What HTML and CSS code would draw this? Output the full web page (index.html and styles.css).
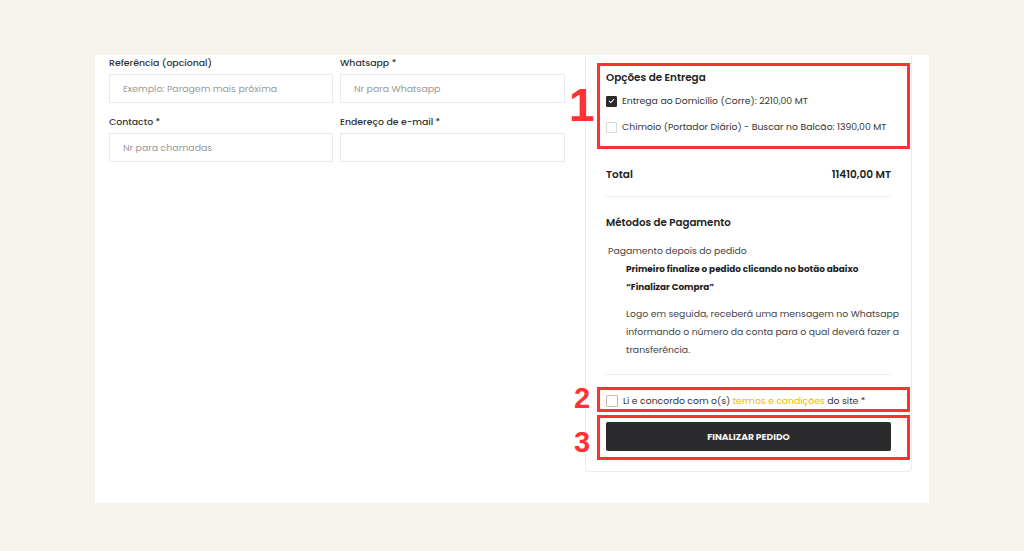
FILE: index.html
```html
<!DOCTYPE html>
<html lang="pt">
<head>
<meta charset="utf-8">
<link rel="stylesheet" href="styles.css">
</head>
<body>
<div class="panel">
  <div class="form">
    <div class="field">
      <label class="label">Referência (opcional)</label>
      <div class="input placeholder">Exemplo: Paragem mais próxima</div>
    </div>
    <div class="field">
      <label class="label">Whatsapp *</label>
      <div class="input placeholder">Nr para Whatsapp</div>
    </div>
    <div class="field">
      <label class="label">Contacto *</label>
      <div class="input placeholder">Nr para chamadas</div>
    </div>
    <div class="field">
      <label class="label">Endereço de e-mail *</label>
      <div class="input"></div>
    </div>
  </div>

  <div class="card">
    <h3 class="heading">Opções de Entrega</h3>
    <div class="option first">
      <span class="box checked">
        <svg viewBox="0 0 12 12" width="12" height="12"><path d="M3 6.2 L5.1 8.2 L9 4" fill="none" stroke="#fff" stroke-width="1.4" stroke-linecap="round" stroke-linejoin="round"/></svg>
      </span>
      <span>Entrega ao Domicílio (Corre): 2210,00 MT</span>
    </div>
    <div class="option">
      <span class="box"></span>
      <span>Chimoio (Portador Diário) - Buscar no Balcão: 1390,00 MT</span>
    </div>

    <div class="total">
      <span>Total</span>
      <span>11410,00 MT</span>
    </div>

    <h3 class="heading methods">Métodos de Pagamento</h3>
    <div class="payment">
      <div class="pay-title">Pagamento depois do pedido</div>
      <div class="pay-body">
        <p class="strong">Primeiro finalize o pedido clicando no botão abaixo<br>“Finalizar Compra”</p>
        <p>Logo em seguida, receberá uma mensagem no Whatsapp informando o número da conta para o qual deverá fazer a transferência.</p>
      </div>
    </div>

    <div class="terms">
      <span class="box terms-box"></span>
      <span>Li e concordo com o(s) <span class="link">termos e condições</span> do site *</span>
    </div>

    <button class="submit">FINALIZAR PEDIDO</button>

    <div class="mark mark1"></div>
    <div class="mark mark2"></div>
    <div class="mark mark3"></div>
    <span class="num num1">1</span>
    <span class="num num2">2</span>
    <span class="num num3">3</span>
  </div>
</div>
</body>
</html>
```

FILE: styles.css
```css
* { box-sizing: border-box; }
html, body { margin: 0; padding: 0; }
body {
  background: #f6f2ec;
  font-family: "Poppins", "Inter", "Liberation Sans", sans-serif;
  color: #333;
  width: 1024px;
  height: 551px;
  overflow: hidden;
}
.panel {
  margin: 55px 0 0 95px;
  width: 834px;
  height: 448px;
  background: #fff;
  display: flex;
  align-items: flex-start;
  padding-left: 14px;
}
.form {
  display: grid;
  grid-template-columns: 224px 225px;
  column-gap: 7px;
  row-gap: 11px;
  width: 456px;
}
.field { display: flex; flex-direction: column; }
.label {
  font-size: 9.35px;
  line-height: 15px;
  font-weight: 500;
  color: #333;
  margin-bottom: 4px;
}
.input {
  height: 29px;
  border: 1px solid #e9e9e9;
  font-size: 9.4px;
  line-height: 27px;
  padding-left: 13px;
}
.placeholder { color: #9a9a9a; }

.card {
  position: relative;
  margin-left: 20px;
  width: 327px;
  border: 1px solid #ededed;
  border-top: none;
  border-radius: 0 0 3px 3px;
  padding: 15px 20px 20px;
  font-size: 9.3px;
}
.heading {
  margin: 0;
  font-size: 10.4px;
  line-height: 16px;
  font-weight: 600;
  color: #222;
}
.option {
  display: flex;
  align-items: center;
  gap: 5px;
  line-height: 16px;
  margin-top: 10px;
  color: #333;
}
.option.first { margin-top: 7px; }
.box {
  width: 11px;
  height: 11px;
  border: 1px solid #d9d9d9;
  border-radius: 1px;
  background: #fff;
  display: inline-flex;
  align-items: center;
  justify-content: center;
  flex: none;
}
.box.checked { background: #2b2b2d; border-color: #2b2b2d; }
.box.checked svg { width: 10px; height: 10px; }
.total {
  display: flex;
  justify-content: space-between;
  margin-top: 32px;
  padding-bottom: 13px;
  border-bottom: 1px solid #ececec;
  font-size: 10.5px;
  line-height: 16px;
  font-weight: 600;
  color: #222;
}
.methods { margin-top: 18px; font-size: 10.25px; }
.payment {
  margin-top: 11px;
  padding-bottom: 15px;
  border-bottom: 1px solid #ececec;
  line-height: 18px;
  color: #444;
}
.pay-title { padding-left: 2px; }
.pay-body { padding-left: 20px; margin-right: -10px; }
.pay-body p { margin: 0; }
.pay-body p + p { margin-top: 9px; }
.strong { font-weight: 700; font-size: 8.9px; color: #1e1e1e; }
.terms {
  display: flex;
  align-items: center;
  gap: 5px;
  margin-top: 18px;
  line-height: 16px;
  color: #333;
}
.terms-box { width: 12px; height: 12px; border-color: #cdb9a5; }
.link { color: #f4b400; }
.submit {
  display: block;
  width: 100%;
  height: 29px;
  margin-top: 13px;
  border: none;
  border-radius: 2px;
  background: #2b2b2d;
  color: #f2f2f2;
  font-family: inherit;
  font-size: 9.2px;
  font-weight: 700;
}
.mark {
  position: absolute;
  left: 11px;
  width: 313px;
  border: 3px solid #ff3131;
}
.mark1 { top: 8px; height: 86px; }
.mark2 { top: 332px; height: 25px; }
.mark3 { top: 360px; height: 45px; }
.num {
  position: absolute;
  font-family: "Liberation Sans", sans-serif;
  font-weight: 700;
  color: #ff3131;
  line-height: 1;
}
.num1 { left: -17px; top: 27px; font-size: 46px; }
.num2 { left: -12px; top: 329px; font-size: 29px; }
.num3 { left: -12px; top: 373px; font-size: 29px; }
```
